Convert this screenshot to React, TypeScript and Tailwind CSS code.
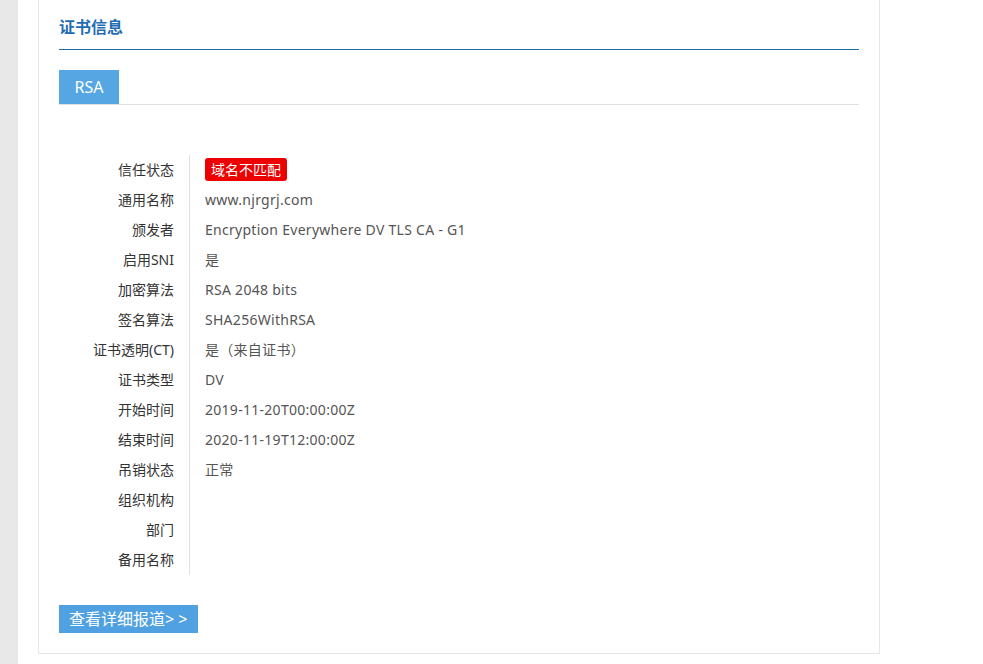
import React from "react";

const rows: [string, React.ReactNode][] = [
  ["信任状态", null],
  ["通用名称", "www.njrgrj.com"],
  ["颁发者", "Encryption Everywhere DV TLS CA - G1"],
  ["启用SNI", "是"],
  ["加密算法", "RSA 2048 bits"],
  ["签名算法", "SHA256WithRSA"],
  ["证书透明(CT)", "是（来自证书）"],
  ["证书类型", "DV"],
  ["开始时间", "2019-11-20T00:00:00Z"],
  ["结束时间", "2020-11-19T12:00:00Z"],
  ["吊销状态", "正常"],
  ["组织机构", ""],
  ["部门", ""],
  ["备用名称", ""],
];

export default function App() {
  return (
    <div
      className="flex h-[664px] w-[983px] overflow-hidden bg-white"
      style={{ fontFamily: '"Noto Sans", "Noto Sans CJK SC", sans-serif' }}
    >
      <div className="w-[18px] shrink-0 bg-[#e8e8e8]" />
      <div className="ml-[20px] flex h-[654px] w-[842px] shrink-0 flex-col border border-t-0 border-[#e6e6e6] pl-[20px]">
        <div className="w-[800px] border-b border-[#1a6fa8] pt-[15px] pb-[10px]">
          <div className="text-[16px] font-bold leading-[24px] text-[#1f6db5]">证书信息</div>
        </div>
        <div className="mt-[20px] flex w-[800px] border-b border-[#e0e0e0]">
          <div className="flex h-[34px] w-[60px] items-center justify-center bg-[#55a6e2] text-[16px] text-white">
            RSA
          </div>
        </div>
        <div className="mt-[50px] flex flex-col">
          {rows.map(([label, value], i) => (
            <div key={i} className="flex h-[30px] text-[14px]">
              <div className="flex w-[131px] items-center justify-end border-r border-[#e0e0e0] pr-[15px] pb-[2px] text-[#333]">
                {label}
              </div>
              <div className="flex items-center pl-[15px] pb-[2px] tracking-[0.28px] text-[#555]">
                {i === 0 ? (
                  <span className="rounded-[3px] bg-[#ee0000] px-[6px] leading-[23px] tracking-normal text-white">
                    域名不匹配
                  </span>
                ) : (
                  value
                )}
              </div>
            </div>
          ))}
        </div>
        <div className="mt-[30px] flex">
          <div className="flex h-[28px] items-center bg-[#4fa1e1] pl-[10px] pr-[11px] pb-[1px] text-[16px] text-white">
            查看详细报道&gt; &gt;
          </div>
        </div>
      </div>
    </div>
  );
}
